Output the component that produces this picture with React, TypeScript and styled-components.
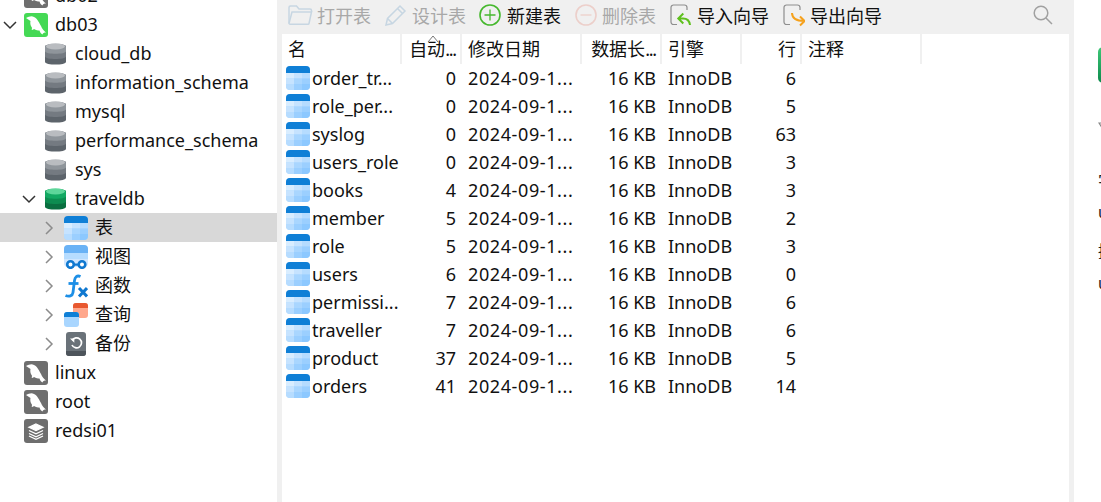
import React from "react";
import styled, { createGlobalStyle } from "styled-components";

const Global = createGlobalStyle`
  html, body { margin: 0; padding: 0; background: #fff; }
  body { font-family: "Noto Sans", "Noto Sans CJK SC", sans-serif; color: #111; }
`;
const Font = `"Noto Sans", "Noto Sans CJK SC", sans-serif`;

const Page = styled.div`
  display: grid;
  grid-template-columns: 277px 797px 27px;
  width: 1101px;
  height: 502px;
  overflow: hidden;
  font-family: ${Font};
  font-size: 18px;
`;
const Sidebar = styled.nav`
  overflow: hidden;
  background: #fff;
`;
const TreeScroll = styled.div`
  margin-top: -19px;
`;
const TreeRow = styled.div<{ $indent: number; $selected?: boolean }>`
  display: flex;
  align-items: center;
  height: 29px;
  padding-left: ${(p) => p.$indent}px;
  background: ${(p) => (p.$selected ? "#d8d8d8" : "transparent")};
  white-space: nowrap;
`;
const Twisty = styled.span<{ $muted?: boolean; $gap: number }>`
  display: flex;
  justify-content: center;
  width: 20px;
  margin-right: ${(p) => p.$gap}px;
  flex: none;
  color: ${(p) => (p.$muted ? "#8c8c8c" : "#333")};
`;
const IconSlot = styled.span<{ $w: number }>`
  display: flex;
  justify-content: center;
  width: ${(p) => p.$w}px;
  flex: none;
`;
const TreeLabel = styled.span<{ $gap: number }>`
  margin-left: ${(p) => p.$gap}px;
  line-height: 29px;
`;

const Main = styled.main`
  display: flex;
  flex-direction: column;
  background: #f0f0f0;
  padding: 0 5px;
  min-width: 0;
`;
const Toolbar = styled.div`
  box-sizing: border-box;
  display: flex;
  align-items: center;
  height: 34px;
  margin: 0 -5px;
  padding: 0 21px 4px 11px;
  flex: none;
`;
const ToolButton = styled.button<{ $disabled?: boolean; $mr: number; $gap: number }>`
  display: flex;
  align-items: center;
  gap: ${(p) => p.$gap}px;
  margin-right: ${(p) => p.$mr}px;
  padding: 0;
  border: 0;
  background: none;
  font: inherit;
  color: ${(p) => (p.$disabled ? "#a8a8a8" : "#111")};
  white-space: nowrap;
`;
const SearchSlot = styled.span`
  margin-left: auto;
  display: flex;
`;
const TablePane = styled.div`
  flex: 1;
  background: #fff;
  min-height: 0;
`;
const Cols = "120px 60px 120px 80px 80px 60px 120px";
const HeaderRow = styled.div`
  position: relative;
  display: grid;
  grid-template-columns: ${Cols};
  height: 30px;
`;
const HeaderCell = styled.div<{ $right?: boolean }>`
  box-sizing: border-box;
  height: 30px;
  line-height: 30px;
  padding: 0 ${(p) => (p.$right ? "4px" : "6px")} 0 6px;
  border-right: 2px solid #f0f0f0;
  text-align: ${(p) => (p.$right ? "right" : "left")};
  white-space: nowrap;
  overflow: hidden;
`;
const Dots = styled.span`
  letter-spacing: -1.200px;
`;
const SortCaret = styled.svg`
  position: absolute;
  left: 145px;
  top: 1px;
`;
const DataRow = styled.div`
  display: grid;
  grid-template-columns: ${Cols};
  height: 28px;
`;
const Cell = styled.div<{ $right?: boolean }>`
  box-sizing: border-box;
  line-height: 28px;
  padding: 0 6px;
  text-align: ${(p) => (p.$right ? "right" : "left")};
  white-space: nowrap;
  overflow: hidden;
`;
const DateCell = styled(Cell)`
  letter-spacing: 0.600px;
`;
const NameCell = styled.div`
  display: flex;
  align-items: center;
  gap: 2px;
  padding-left: 4px;
  line-height: 28px;
  white-space: nowrap;
  overflow: hidden;
`;
const Aside = styled.aside`
  display: flex;
  flex-direction: column;
  align-items: flex-start;
  padding: 47px 0 0 24px;
  background: #fff;
  overflow: hidden;
  font-size: 16px;
`;
const GreenCard = styled.div`
  width: 36px;
  height: 36px;
  flex: none;
  border-radius: 5px;
  background: linear-gradient(#3ec878, #0c8a4c);
`;
const AsideIcon = styled.svg`
  margin-top: 39px;
  flex: none;
`;
const AsideLabel = styled.div<{ $top: number }>`
  margin-top: ${(p) => p.$top}px;
  line-height: 22px;
  color: #222;
  white-space: nowrap;
`;

const Chevron = ({ open }: { open?: boolean }) => (
  <svg width="14" height="14" viewBox="0 0 14 14" fill="none" stroke="currentColor" strokeWidth="1.500">
    {open ? <path d="M1 4 7 10 13 4" /> : <path d="M4 1 10 7 4 13" />}
  </svg>
);

const Conn = ({ bg, kind = "mysql" }: { bg: string; kind?: "mysql" | "redis" }) => (
  <svg width="24" height="24" viewBox="0 0 24 24">
    <rect width="24" height="24" rx="3" fill={bg} />
    {kind === "mysql" ? (
      <path
        fill="#fff"
        d="M2 5C5 4 7 2.500 10 4c4 2 5 6 7 9 1 3 3 5 5 6.500-2 0-3 .5-3.500 2-1.500-1-2.500-2-3-4-1.500 0-3.500-.5-5.500-1.500-.6.6-1.300 1-2.300 1 .2-1 .3-1.700.2-2.600C6.300 12.500 6 10 6.500 8 5 7 3.500 6 2 5z"
      />
    ) : (
      <g fill="none" stroke="#fff" strokeWidth="1.300">
        <path d="M12 5 19 8.300 12 11.500 5 8.300z" fill="#fff" />
        <path d="M5 11.500 12 14.800 19 11.500M5 14.500 12 17.800 19 14.500M5 17 12 20.300 19 17" />
      </g>
    )}
  </svg>
);

const Db = ({ a, b, c, t }: { a: string; b: string; c: string; t: string }) => (
  <svg width="21" height="24" viewBox="0 0 22 24">
    <path d="M0 4C0 1 22 1 22 4V20C22 24 0 24 0 20Z" fill={c} />
    <path d="M0 4C0 1 22 1 22 4V14.500C22 18 0 18 0 14.500Z" fill={b} />
    <path d="M0 4C0 1 22 1 22 4V9C22 12.500 0 12.500 0 9Z" fill={a} />
    <ellipse cx="11" cy="4" rx="10" ry="3.300" fill={t} />
  </svg>
);
const GreyDb = () => <Db a="#8f959b" b="#747a81" c="#5d646b" t="#b9bcc0" />;
const GreenDb = () => <Db a="#13a862" b="#0d8c50" c="#0a6f40" t="#5ed69a" />;

const TableIcon = () => (
  <svg width="24" height="24" viewBox="0 0 24 24" style={{ flex: "none" }}>
    <defs>
      <clipPath id="tbl">
        <rect width="24" height="24" rx="4" />
      </clipPath>
    </defs>
    <g clipPath="url(#tbl)">
      <rect width="24" height="24" fill="#a9d6ff" />
      <rect width="24" height="7" fill="#0f7fd6" />
      <rect y="7" width="8" height="5.500" fill="#d9edff" />
      <rect x="8" y="7" width="8" height="5.500" fill="#c6e3ff" />
      <rect x="16" y="7" width="8" height="5.500" fill="#b6dcff" />
      <rect y="12.500" width="8" height="5.500" fill="#c6e3ff" />
      <rect x="8" y="12.500" width="8" height="5.500" fill="#a9d6ff" />
      <rect x="16" y="12.500" width="8" height="5.500" fill="#9bcfff" />
      <rect y="18" width="8" height="6" fill="#b6dcff" />
      <rect x="8" y="18" width="8" height="6" fill="#9bcfff" />
      <rect x="16" y="18" width="8" height="6" fill="#8cc8ff" />
    </g>
  </svg>
);
const ViewIcon = () => (
  <svg width="24" height="24" viewBox="0 0 24 24">
    <rect width="24" height="22" rx="4" fill="#cfe6ff" />
    <path d="M0 8V4a4 4 0 0 1 4-4h16a4 4 0 0 1 4 4v4z" fill="#6ab2f5" />
    <rect y="8" width="24" height="6" fill="#b6dcff" />
    <circle cx="6.500" cy="19.500" r="3.300" fill="#fff" stroke="#0f78d0" strokeWidth="2.600" />
    <circle cx="18" cy="19.500" r="3.300" fill="#fff" stroke="#0f78d0" strokeWidth="2.600" />
    <rect x="9" y="18.500" width="6" height="2.200" fill="#0f78d0" />
  </svg>
);
const FuncIcon = () => (
  <svg width="24" height="24" viewBox="0 0 24 24" fill="none" stroke="#1d8fe6" strokeWidth="2.800">
    <path d="M16.500 2.500C13 1 11 3 10.500 6.500L9 18.500C8.500 22 5 23 1.500 21.500" />
    <path d="M4.500 9.500H14.500" />
    <path d="M15 14 23 22.500M23 14 15 22.500" strokeWidth="3" stroke="#0f78d0" />
  </svg>
);
const QueryIcon = () => (
  <svg width="24" height="24" viewBox="0 0 24 24">
    <rect x="9" y="0" width="15" height="15" rx="3" fill="#ffa78c" />
    <path d="M9 5V3a3 3 0 0 1 3-3h9a3 3 0 0 1 3 3v2z" fill="#e8582f" />
    <rect x="0" y="9" width="15" height="15" rx="3" fill="#a9d6ff" />
    <path d="M0 14v-2a3 3 0 0 1 3-3h9a3 3 0 0 1 3 3v2z" fill="#0f7fd6" />
  </svg>
);
const BackupIcon = () => (
  <svg width="20" height="24" viewBox="0 0 20 24">
    <rect width="20" height="24" rx="3" fill="#6a7279" />
    <path d="M0 19h20v2a3 3 0 0 1-3 3H3a3 3 0 0 1-3-3z" fill="#4d545b" />
    <path d="M6.200 8.300A5 5 0 1 1 6 13" fill="none" stroke="#fff" strokeWidth="1.700" />
    <path d="M4 6.500h4.300v4.300z" fill="#fff" />
  </svg>
);

const FolderIcon = () => (
  <svg width="25" height="22" viewBox="0 0 25 22" fill="none" stroke="#c7d6e2" strokeWidth="1.500">
    <path d="M1 19V3.500A1.500 1.500 0 0 1 2.500 2h6l2.500 3h11a1.500 1.500 0 0 1 1.500 1.500V8" />
    <path d="M1 19.500 4 8h19.500L21 19.500a1 1 0 0 1-1 .8H2z" />
  </svg>
);
const PencilIcon = () => (
  <svg width="23" height="23" viewBox="0 0 23 23" fill="none" stroke="#c7d6e2" strokeWidth="1.500">
    <path d="M2 21 3.500 14.500 16 2l5 5L8.500 19.500z" />
    <path d="M13.500 4.500l5 5M3.500 14.500l5 5" />
  </svg>
);
const CircleIcon = ({ color, plus }: { color: string; plus?: boolean }) => (
  <svg width="22" height="22" viewBox="0 0 22 22" fill="none" stroke={color} strokeWidth="1.600">
    <circle cx="11" cy="11" r="10" />
    <path d={plus ? "M11 5.500v11M5.500 11h11" : "M5.500 11h11"} strokeWidth="1.300" />
  </svg>
);
const WizardIcon = ({ color, out }: { color: string; out?: boolean }) => (
  <svg width="22" height="23" viewBox="0 0 22 23" fill="none">
    <path
      d="M7 20.500H3.500a2.500 2.500 0 0 1-2.500-2.500V3.500A2.500 2.500 0 0 1 3.500 1h11A2.500 2.500 0 0 1 17 3.500V6"
      stroke="#8e8e8e"
      strokeWidth="1.200"
    />
    {out ? (
      <path d="M9 9c.2 5 3 8 12 8M17 12.500l4.500 4.500-4.500 4.500" stroke={color} strokeWidth="2" />
    ) : (
      <path d="M8.500 14.500H13c4 0 6.500 2.500 7 6.500M13.300 9.500l-5 5 5 5" stroke={color} strokeWidth="2" />
    )}
  </svg>
);
const SearchIcon = () => (
  <svg width="20" height="20" viewBox="0 0 20 20" fill="none" stroke="#a0a0a0" strokeWidth="1.500">
    <circle cx="8" cy="8" r="6.800" />
    <path d="M13 13l6 6" />
  </svg>
);

type Tree = {
  label: string;
  indent: number;
  slot: number;
  gap: number;
  icon: React.ReactNode;
  twisty?: "open" | "closed";
  twistGap?: number;
  muted?: boolean;
  selected?: boolean;
};
const mysqlGrey = <Conn bg="#6e6e6e" />;
const tree: Tree[] = [
  { label: "db02", indent: 24, slot: 24, gap: 7, icon: mysqlGrey },
  { label: "db03", indent: 0, slot: 24, gap: 7, icon: <Conn bg="#45d955" />, twisty: "open", twistGap: 4 },
  { label: "cloud_db", indent: 45, slot: 21, gap: 9, icon: <GreyDb /> },
  { label: "information_schema", indent: 45, slot: 21, gap: 9, icon: <GreyDb /> },
  { label: "mysql", indent: 45, slot: 21, gap: 9, icon: <GreyDb /> },
  { label: "performance_schema", indent: 45, slot: 21, gap: 9, icon: <GreyDb /> },
  { label: "sys", indent: 45, slot: 21, gap: 9, icon: <GreyDb /> },
  { label: "traveldb", indent: 19, slot: 21, gap: 9, icon: <GreenDb />, twisty: "open", twistGap: 6 },
  { label: "表", indent: 39, slot: 24, gap: 7, icon: <TableIcon />, twisty: "closed", twistGap: 5, muted: true, selected: true },
  { label: "视图", indent: 39, slot: 24, gap: 7, icon: <ViewIcon />, twisty: "closed", twistGap: 5, muted: true },
  { label: "函数", indent: 39, slot: 24, gap: 7, icon: <FuncIcon />, twisty: "closed", twistGap: 5, muted: true },
  { label: "查询", indent: 39, slot: 24, gap: 7, icon: <QueryIcon />, twisty: "closed", twistGap: 5, muted: true },
  { label: "备份", indent: 39, slot: 24, gap: 7, icon: <BackupIcon />, twisty: "closed", twistGap: 5, muted: true },
  { label: "linux", indent: 24, slot: 24, gap: 7, icon: mysqlGrey },
  { label: "root", indent: 24, slot: 24, gap: 7, icon: mysqlGrey },
  { label: "redsi01", indent: 24, slot: 24, gap: 7, icon: <Conn bg="#6e6e6e" kind="redis" /> },
];

const tables: [string, string, string][] = [
  ["order_tr...", "0", "6"],
  ["role_per...", "0", "5"],
  ["syslog", "0", "63"],
  ["users_role", "0", "3"],
  ["books", "4", "3"],
  ["member", "5", "2"],
  ["role", "5", "3"],
  ["users", "6", "0"],
  ["permissi...", "7", "6"],
  ["traveller", "7", "6"],
  ["product", "37", "5"],
  ["orders", "41", "14"],
];

export default function App() {
  return (
    <Page>
      <Global />
      <Sidebar>
        <TreeScroll>
          {tree.map((n) => (
            <TreeRow key={n.label} $indent={n.indent} $selected={n.selected}>
              {n.twisty && (
                <Twisty $muted={n.muted} $gap={n.twistGap || 0}>
                  <Chevron open={n.twisty === "open"} />
                </Twisty>
              )}
              <IconSlot $w={n.slot}>{n.icon}</IconSlot>
              <TreeLabel $gap={n.gap}>{n.label}</TreeLabel>
            </TreeRow>
          ))}
        </TreeScroll>
      </Sidebar>
      <Main>
        <Toolbar>
          <ToolButton $disabled $mr={13} $gap={4}><FolderIcon /><span>打开表</span></ToolButton>
          <ToolButton $disabled $mr={13} $gap={5}><PencilIcon /><span>设计表</span></ToolButton>
          <ToolButton $mr={14} $gap={6}><CircleIcon color="#46b82e" plus /><span>新建表</span></ToolButton>
          <ToolButton $disabled $mr={14} $gap={5}><CircleIcon color="#eccfca" /><span>删除表</span></ToolButton>
          <ToolButton $mr={14} $gap={5}><WizardIcon color="#5fc01e" /><span>导入向导</span></ToolButton>
          <ToolButton $mr={0} $gap={5}><WizardIcon color="#f5a11c" out /><span>导出向导</span></ToolButton>
          <SearchSlot><SearchIcon /></SearchSlot>
        </Toolbar>
        <TablePane>
          <HeaderRow>
            <HeaderCell>名</HeaderCell>
            <HeaderCell $right>自动<Dots>...</Dots></HeaderCell>
            <HeaderCell>修改日期</HeaderCell>
            <HeaderCell $right>数据长<Dots>...</Dots></HeaderCell>
            <HeaderCell>引擎</HeaderCell>
            <HeaderCell $right>行</HeaderCell>
            <HeaderCell>注释</HeaderCell>
            <SortCaret width="12" height="8" viewBox="0 0 12 8" fill="none" stroke="#777" strokeWidth="1">
              <path d="M1 7 6 1l5 6" />
            </SortCaret>
          </HeaderRow>
          {tables.map(([name, auto, rows]) => (
            <DataRow key={name}>
              <NameCell><TableIcon /><span>{name}</span></NameCell>
              <Cell $right>{auto}</Cell>
              <DateCell>2024-09-1...</DateCell>
              <Cell $right>16 KB</Cell>
              <Cell>InnoDB</Cell>
              <Cell $right>{rows}</Cell>
              <Cell />
            </DataRow>
          ))}
        </TablePane>
      </Main>
      <Aside>
        <GreenCard />
        <AsideIcon width="14" height="18" viewBox="0 0 14 18" fill="none" stroke="#888" strokeWidth="1.200">
          <path d="M1 1h12L8.500 8v9L5.500 15V8z" />
        </AsideIcon>
        <AsideLabel $top={30}>字</AsideLabel>
        <AsideLabel $top={9}>u</AsideLabel>
        <AsideLabel $top={17}>描</AsideLabel>
        <AsideLabel $top={10}>u</AsideLabel>
      </Aside>
    </Page>
  );
}
